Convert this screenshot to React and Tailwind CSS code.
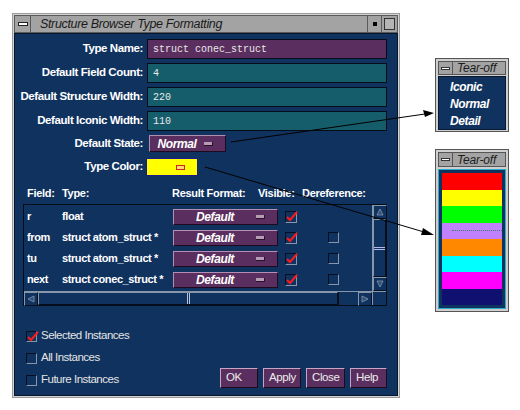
import React from 'react';

const sans = "font-['Liberation_Sans',Arial,sans-serif]";
const mono = "font-['Liberation_Mono','DejaVu_Sans_Mono',monospace]";

function Check({ checked, size = 'w-[12px] h-[12px]' }) {
  return (
    <div className={`relative ${size} bg-[#10325f] border border-t-[#050f1f] border-l-[#050f1f] border-b-[#8796aa] border-r-[#8796aa]`}>
      {checked && (
        <svg className="absolute -top-[1px] left-0" width="12" height="11" viewBox="0 0 12 11">
          <path d="M1 6 L4 9 L11 1" stroke="#ff1a1a" strokeWidth="2" fill="none" />
        </svg>
      )}
    </div>
  );
}

function Indicator({ className = '' }) {
  return <div className={`w-[9px] h-[4px] bg-[#b59bb4] border-b border-r border-[#2a1028] ${className}`} />;
}

function OptionButton({ label, className = '' }) {
  return (
    <div className={`flex items-center bg-[#5a2e5e] border border-t-[#b48fb2] border-l-[#b48fb2] border-b-[#1d0a1e] border-r-[#1d0a1e] ${className}`}>
      <span className="flex-1 text-center italic font-bold text-white text-[12px] tracking-[-0.4px] leading-none">{label}</span>
      <Indicator className="mr-[12px]" />
    </div>
  );
}

function Label({ children }) {
  return (
    <div className="w-[128px] text-right font-bold text-[11.5px] tracking-[-0.4px] text-white leading-none whitespace-nowrap">
      {children}
    </div>
  );
}

function Field({ label, value, purple }) {
  return (
    <div className="flex items-center h-[20px]">
      <Label>{label}</Label>
      <div
        className={`ml-[4px] flex-1 h-[20px] flex items-center pl-[5px] border border-[#060d18] ${
          purple ? 'bg-[#5a2e5e]' : 'bg-[#155d6b]'
        }`}
      >
        <span className={`${mono} text-[10px] text-[#e8e8e8]`}>{value}</span>
      </div>
    </div>
  );
}

const rows = [
  { f: 'r', t: 'float', deref: false },
  { f: 'from', t: 'struct atom_struct *', deref: true },
  { f: 'tu', t: 'struct atom_struct *', deref: true },
  { f: 'next', t: 'struct conec_struct *', deref: true },
];

function ArrowBox({ dir }) {
  return (
    <div className="w-[14px] h-[14px] bg-[#10325f] border border-t-[#8796aa] border-l-[#8796aa] border-b-[#050f1f] border-r-[#050f1f] flex items-center justify-center">
      <svg width="8" height="8" viewBox="0 0 8 8">
        {dir === 'up' && <path d="M4 1 L7 7 L1 7 Z" fill="#2d4f7a" stroke="#8796aa" strokeWidth="0.8" />}
        {dir === 'down' && <path d="M1 1 L7 1 L4 7 Z" fill="#2d4f7a" stroke="#8796aa" strokeWidth="0.8" />}
        {dir === 'left' && <path d="M1 4 L7 1 L7 7 Z" fill="#2d4f7a" stroke="#8796aa" strokeWidth="0.8" />}
        {dir === 'right' && <path d="M7 4 L1 1 L1 7 Z" fill="#2d4f7a" stroke="#8796aa" strokeWidth="0.8" />}
      </svg>
    </div>
  );
}

function Button({ label, w }) {
  return (
    <div className={`${w} h-[20px] flex items-center pl-[5px] bg-[#5a2e5e] border border-t-[#c7a6c5] border-l-[#c7a6c5] border-b-[#1d0a1e] border-r-[#1d0a1e] text-[11.5px] tracking-[-0.4px] text-[#ececec] leading-none whitespace-nowrap`}>
      {label}
    </div>
  );
}

function TearTitle() {
  return (
    <div className="flex items-center h-[15px] bg-[#a3a3a3] border border-[#555]">
      <div className="w-[14px] h-full flex items-center justify-center border-r border-[#555]">
        <div className="w-[9px] h-[3px] bg-white border border-[#333]" />
      </div>
      <span className="ml-[4px] italic text-[12px] tracking-[-0.2px] text-[#1c1c1c] leading-none">Tear-off</span>
    </div>
  );
}

export default function App() {
  return (
    <div className={`relative w-[520px] h-[410px] bg-white overflow-hidden flex ${sans}`}>
      {/* main window */}
      <div className="ml-[12px] mt-[13px] w-[388px] h-[385px] flex flex-col border border-[#9a9a9a] bg-[#d4d4d4] p-px">
        <div className="flex items-center h-[18px] bg-[#a3a3a3] border border-[#5a5a5a]">
          <div className="w-[16px] h-full flex items-center justify-center border-r border-[#5a5a5a]">
            <div className="w-[10px] h-[4px] bg-white border border-[#222]" />
          </div>
          <span className="ml-[9px] italic text-[12.5px] tracking-[-0.35px] text-[#1a1a1a] leading-none whitespace-nowrap">
            Structure Browser Type Formatting
          </span>
          <div className="flex-1" />
          <div className="w-[14px] h-full flex items-center justify-center border-l border-[#5a5a5a]">
            <div className="w-[4px] h-[4px] bg-black" />
          </div>
          <div className="w-[16px] h-full flex items-center justify-center border-l border-[#5a5a5a]">
            <div className="w-[11px] h-[12px] border border-[#333] bg-[#b5b5b5]" />
          </div>
        </div>

        <div className="flex-1 bg-[#10325f] flex flex-col border border-[#06162e]">
          <div className="flex flex-col gap-[4px] pt-[5px] pr-[10px]">
            <Field label="Type Name:" value="struct conec_struct" purple />
            <Field label="Default Field Count:" value="4" />
            <Field label="Default Structure Width:" value="220" />
            <Field label="Default Iconic Width:" value="110" />
            <div className="flex items-center h-[17px]">
              <Label>Default State:</Label>
              <OptionButton label="Normal" className="ml-[6px] w-[77px] h-[17px]" />
            </div>
            <div className="flex items-center h-[18px] mt-[2px]">
              <Label>Type Color:</Label>
              <div className="ml-[3px] w-[52px] h-[18px] bg-[#ffff00] border border-[#1c1c8a] flex items-center justify-end pr-[12px]">
                <div className="w-[9px] h-[5px] bg-[#ffe066] border border-[#d02020]" />
              </div>
            </div>
          </div>

          {/* header */}
          <div className="flex items-center mt-[10px] h-[14px] font-bold text-[11px] tracking-[-0.3px] text-white leading-none whitespace-nowrap">
            <div className="w-[47px] pl-[12px]">Field:</div>
            <div className="w-[110px]">Type:</div>
            <div className="w-[86px]">Result Format:</div>
            <div className="w-[44px]">Visible:</div>
            <div>Dereference:</div>
          </div>

          {/* table */}
          <div className="ml-[8px] mr-[10px] mt-[4px] h-[102px] flex flex-col border border-[#040c18] bg-[#10325f]">
            <div className="flex flex-1">
              <div className="flex-1 flex flex-col pt-[1px]">
                {rows.map((r) => (
                  <div key={r.f} className="flex items-center h-[21px] font-bold text-[11px] tracking-[-0.4px] text-white leading-none whitespace-nowrap">
                    <div className="w-[38px] pl-[3px]">{r.f}</div>
                    <div className="w-[111px]">{r.t}</div>
                    <OptionButton label="Default" className="w-[105px] h-[16px]" />
                    <div className="ml-[7px]">
                      <Check checked />
                    </div>
                    {r.deref && (
                      <div className="ml-[31px]">
                        <Check size="w-[11px] h-[11px]" />
                      </div>
                    )}
                  </div>
                ))}
              </div>
              <div className="w-[14px] flex flex-col border-l border-[#8796aa]">
                <ArrowBox dir="up" />
                <div className="flex-1 flex flex-col">
                  <div className="flex-1 border border-t-[#8796aa] border-l-[#8796aa] border-b-[#050f1f] border-r-[#050f1f] flex items-center">
                    <div className="w-full h-[3px] border-t border-b border-[#b8b8e8]" />
                  </div>
                </div>
                <ArrowBox dir="down" />
              </div>
            </div>
            <div className="flex h-[14px] border-t border-[#8796aa]">
              <ArrowBox dir="left" />
              <div className="flex-1 flex border border-t-[#8796aa] border-l-[#8796aa] border-b-[#050f1f] border-r-[#050f1f]">
                <div className="flex-1" />
                <div className="w-[3px] border-l border-r border-[#b8c4d8]" />
                <div className="flex-1" />
              </div>
              <div className="w-[20px] border-l border-[#050f1f]" />
              <ArrowBox dir="right" />
              <div className="w-[14px] border-l border-[#8796aa]" />
            </div>
          </div>

          {/* bottom */}
          <div className="flex items-end justify-between mt-[19px] pr-[10px]">
            <div className="flex flex-col pl-[11px]">
              {[
                ['Selected Instances', true],
                ['All Instances', false],
                ['Future Instances', false],
              ].map(([l, c]) => (
                <div key={l} className="flex items-center h-[22px] gap-[4px]">
                  <Check checked={c} size="w-[11px] h-[11px]" />
                  <span className="text-[11.5px] tracking-[-0.5px] text-[#e4e4e4] leading-none whitespace-nowrap">{l}</span>
                </div>
              ))}
            </div>
            <div className="flex gap-[5px] mb-[3px]">
              <Button label="OK" w="w-[38px]" />
              <Button label="Apply" w="w-[38px]" />
              <Button label="Close" w="w-[39px]" />
              <Button label="Help" w="w-[37px]" />
            </div>
          </div>
        </div>
      </div>

      {/* tear-off menus */}
      <div className="ml-[35px] flex flex-col">
        <div className="mt-[58px] w-[74px] h-[74px] flex flex-col border border-[#555] bg-[#cfcfcf] p-[2px]">
          <TearTitle />
          <div className="flex-1 mt-[1px] bg-[#10325f] border border-[#08182e] flex flex-col pl-[11px] pt-[1px] italic font-bold text-[12px] tracking-[-0.4px] text-white leading-none">
            <div className="h-[17px] flex items-center">Iconic</div>
            <div className="h-[17px] flex items-center">Normal</div>
            <div className="h-[17px] flex items-center">Detail</div>
          </div>
        </div>
        <div className="mt-[17px] w-[74px] h-[163px] flex flex-col border border-[#555] bg-[#cfcfcf] p-[2px]">
          <TearTitle />
          <div className="flex-1 mt-[2px] bg-[#10325f] border border-[#2aa8c8] p-[3px] flex flex-col">
            <div className="flex-1 bg-[#ff0000]" />
            <div className="flex-1 bg-[#ffff00]" />
            <div className="flex-1 bg-[#00ff00]" />
            <div className="flex-1 bg-[#c080ff] flex items-center pl-[10px]">
              <div className="w-full border-t border-dotted border-[#3a7a6a]" />
            </div>
            <div className="flex-1 bg-[#ff8800]" />
            <div className="flex-1 bg-[#00ffff]" />
            <div className="flex-1 bg-[#ff00ff]" />
            <div className="flex-1 bg-[#101070]" />
          </div>
        </div>
      </div>

      {/* callout arrows */}
      <svg className="absolute inset-0 pointer-events-none" width="520" height="410" viewBox="0 0 520 410">
        <line x1="231" y1="142" x2="425" y2="114" stroke="#000" strokeWidth="1" />
        <path d="M434 113 L423 110 L425 117 Z" fill="#000" />
        <line x1="205" y1="167" x2="424" y2="232" stroke="#000" strokeWidth="1" />
        <path d="M434 235 L423 228 L421 235 Z" fill="#000" />
      </svg>
    </div>
  );
}
